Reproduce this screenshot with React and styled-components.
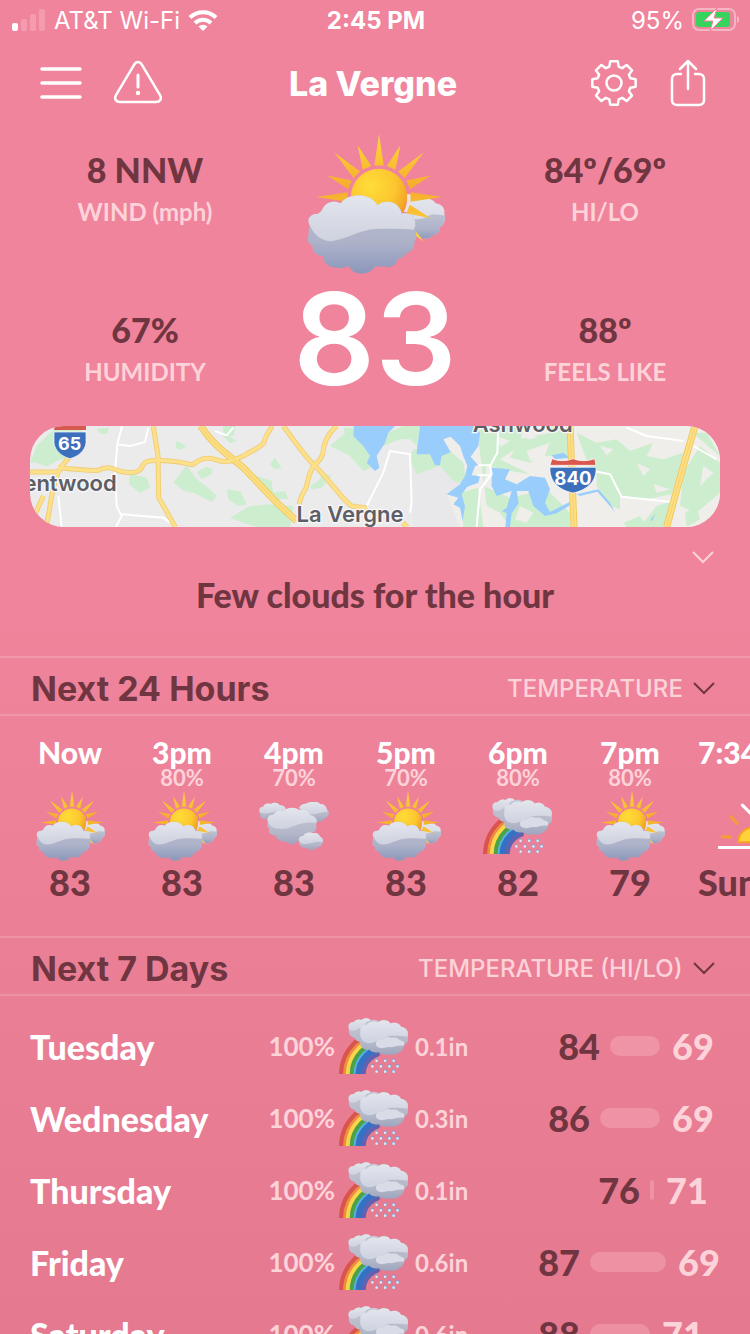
import React from 'react'
import styled, { createGlobalStyle, ThemeProvider } from 'styled-components'

const theme = {
  colors: {
    top: '#f0849c',
    bottom: '#e5798f',
    dark: '#6f3540',
    soft: '#fdd3da',
    white: '#ffffff',
    line: 'rgba(255, 255, 255, 0.16)',
    bar: 'rgba(255, 200, 210, 0.3)',
  },
  fonts: {
    ui: '"Inter", "Liberation Sans", sans-serif',
    hand: '"Lato", "Open Sans", sans-serif',
  },
}

const hours = [
  { time: 'Now', chance: '', icon: 'sun', temp: '83' },
  { time: '3pm', chance: '80%', icon: 'sun', temp: '83' },
  { time: '4pm', chance: '70%', icon: 'clouds', temp: '83' },
  { time: '5pm', chance: '70%', icon: 'sun', temp: '83' },
  { time: '6pm', chance: '80%', icon: 'rainbow', temp: '82' },
  { time: '7pm', chance: '80%', icon: 'sun', temp: '79' },
  { time: '7:34pm', chance: '', icon: 'sunset', temp: 'Sunset', wide: true },
]

// start and span are percentages of the range column
const days = [
  { day: 'Tuesday', chance: '100%', amount: '0.1in', hi: 84, lo: 69, start: 45, span: 25 },
  { day: 'Wednesday', chance: '100%', amount: '0.3in', hi: 86, lo: 69, start: 40, span: 30 },
  { day: 'Thursday', chance: '100%', amount: '0.1in', hi: 76, lo: 71, start: 65, span: 2 },
  { day: 'Friday', chance: '100%', amount: '0.6in', hi: 87, lo: 69, start: 35, span: 38 },
  { day: 'Saturday', chance: '100%', amount: '0.6in', hi: 88, lo: 71, start: 35, span: 30 },
]

const GlobalStyle = createGlobalStyle`
  *{
    box-sizing:border-box;
  }
  body{
    margin:0;
    background-color:#e5798f;
  }
  h1, h2, p, ul, dl, dd{
    margin:0;
    padding:0;
  }
  ul{
    list-style:none;
  }
  button, select{
    font:inherit;
    color:inherit;
    border:0;
    padding:0;
    background:none;
    cursor:pointer;
  }
`;

function rays() {
  const list = []
  for (let i = 0; i < 11; i++) {
    const a = ((-180 + i * 22.5) * Math.PI) / 180
    const tip = i % 2 === 0 ? 188 : 167
    const cx = 302
    const cy = 218
    const px = -Math.sin(a) * 14
    const py = Math.cos(a) * 14
    const bx = cx + Math.cos(a) * 94
    const by = cy + Math.sin(a) * 94
    list.push(
      `M${cx + Math.cos(a) * tip} ${cy + Math.sin(a) * tip}L${bx + px} ${by + py}L${bx - px} ${by - py}Z`
    )
  }
  return list.join('')
}

function Defs() {
  return (
    <svg width="0" height="0" style={{ display: 'block' }} aria-hidden="true">
      <defs>
        <radialGradient id="sunFill" cx="35%" cy="30%" r="75%">
          <stop offset="0" stopColor="#ffdd38" />
          <stop offset="0.6" stopColor="#fcc52f" />
          <stop offset="1" stopColor="#f19a22" />
        </radialGradient>
        <linearGradient id="rayFill" x1="0" y1="0" x2="0" y2="1">
          <stop offset="0" stopColor="#ffd83a" />
          <stop offset="0.5" stopColor="#f5ac2c" />
          <stop offset="1" stopColor="#ffd83a" />
        </linearGradient>
        <linearGradient id="cloudLight" x1="0" y1="0" x2="0" y2="1">
          <stop offset="0" stopColor="#e4e6ed" />
          <stop offset="1" stopColor="#ced2df" />
        </linearGradient>
        <linearGradient id="cloudDark" x1="0" y1="0" x2="0" y2="1">
          <stop offset="0" stopColor="#bcc0d0" />
          <stop offset="0.6" stopColor="#adb2c9" />
          <stop offset="1" stopColor="#8b97bb" />
        </linearGradient>
        <linearGradient id="cloudSoft" x1="0" y1="0" x2="0" y2="1">
          <stop offset="0" stopColor="#c6c9d5" />
          <stop offset="0.7" stopColor="#b3b7c8" />
          <stop offset="1" stopColor="#9ea5be" />
        </linearGradient>
        <clipPath id="bowClip">
          <path d="M230 120H330L362 160V228H230Z" />
        </clipPath>
      </defs>
    </svg>
  )
}

const cloudTop = 'M96 305C85 285 95 268 120 268C130 262 132 258 133 255C142 233 168 227 188 237C205 212 243 210 267 218C282 222 292 232 297 243C318 226 352 230 363 252C368 260 370 264 368 268C395 262 414 280 410 305'

function PartlySunny() {
  return (
    <svg viewBox="84 30 412 418" overflow="visible" aria-hidden="true">
      <path d="M392 226C400 230 410 228 418 228C440 218 462 222 470 236C490 240 500 252 497 268C502 285 498 300 484 308C482 325 474 332 464 332C454 345 432 345 422 336L385 345Z" fill="url(#cloudLight)" />
      <path d="M385 285C410 284 430 288 450 274C468 266 485 275 498 272C500 288 496 302 484 308C482 325 474 332 464 332C454 345 432 345 422 336L385 345Z" fill="url(#cloudDark)" />
      <circle cx="302" cy="218" r="84" fill="url(#sunFill)" />
      <path d="M385 210H398V236C398 250 392 258 386 264L376 262C384 248 388 230 385 210Z" fill="#eee2e0" />
      <path d={rays()} fill="url(#rayFill)" />
      <path d={cloudTop + 'C416 330 412 345 408 352C410 372 396 385 382 386C376 398 368 402 360 402C350 428 330 432 318 424C306 428 300 426 292 424C282 440 262 448 248 447C232 446 220 440 212 424C200 430 180 432 168 428C150 426 136 414 134 394C116 394 102 382 104 364C90 360 86 340 92 330C90 320 92 312 96 305Z'} fill="url(#cloudDark)" />
      <path d={cloudTop + 'L406 316C370 312 330 312 290 314C240 318 208 344 160 350C130 350 114 334 102 316Z'} fill="url(#cloudLight)" />
    </svg>
  )
}

function Clouds() {
  return (
    <svg viewBox="780 232 206 143" aria-hidden="true">
      <path d="M784 270C776 256 782 246 792 246C796 236 808 234 815 238C826 230 838 236 842 242C852 240 860 250 860 260L830 288C815 292 806 286 804 282C792 284 784 280 784 270Z" fill="url(#cloudSoft)" />
      <path d="M784 264C778 252 784 246 792 246C796 236 808 234 815 238C826 230 838 236 842 242C852 240 860 250 860 258C836 250 815 272 784 264Z" fill="url(#cloudLight)" />
      <path d="M898 250C902 238 916 238 922 236C936 228 952 230 960 238C970 236 980 246 980 254C990 262 986 276 976 278C968 290 952 292 942 290L905 280Z" fill="url(#cloudSoft)" />
      <path d="M898 250C902 238 916 238 922 236C936 228 952 230 960 238C970 236 980 246 982 262C965 258 945 272 925 268Z" fill="url(#cloudLight)" />
      <path d="M806 290C800 278 812 268 822 270C828 258 842 254 852 258C866 246 890 246 898 256C914 250 930 262 930 270C946 272 954 286 948 298C952 312 944 322 932 324L918 346C904 350 896 346 892 348C880 360 866 356 860 348C846 350 832 344 830 332C814 330 806 322 810 310C802 304 804 296 806 290Z" fill="url(#cloudSoft)" />
      <path d="M808 294C800 278 812 268 822 270C828 258 842 254 852 258C866 246 890 246 898 256C914 250 930 262 930 270C946 272 954 286 948 294C920 288 890 298 870 308C840 316 815 310 808 294Z" fill="url(#cloudLight)" />
      <path d="M898 348C894 338 904 332 910 332C916 320 932 320 938 324C950 320 958 328 960 334C970 338 970 350 966 354C964 364 954 366 950 366C942 376 926 374 922 368C906 370 896 358 898 348Z" fill="url(#cloudSoft)" />
      <path d="M898 346C894 338 904 332 910 332C916 320 932 320 938 324C950 320 958 328 960 334C968 338 970 346 968 350C950 346 936 354 918 356C908 356 900 352 898 346Z" fill="url(#cloudLight)" />
    </svg>
  )
}

// colour, radius, thickness
const bands = [
  ['#d9544f', 134, 14],
  ['#ef8a3e', 124, 9],
  ['#f9d549', 114, 13],
  ['#4ba345', 102, 13],
  ['#4fb2e3', 93, 7],
  ['#3470c4', 81, 19],
  ['#5f62b0', 66, 13],
]

const drops = [[352, 187], [378, 187], [404, 187], [339, 204], [365, 204], [391, 204], [416, 204], [352, 220], [378, 220], [404, 220]]

function Rainbow() {
  return (
    <svg viewBox="237 57 214 171" aria-hidden="true">
      <g clipPath="url(#bowClip)" fill="none">
        {bands.map(([color, r, w]) => (
          <circle key={color} cx="378" cy="230" r={r} stroke={color} strokeWidth={w} />
        ))}
      </g>
      <path d="M268 92C262 78 270 68 282 70C288 60 300 60 306 63C316 54 330 58 334 64C346 60 356 64 358 68C372 60 390 64 394 74C410 68 424 76 426 84C442 86 452 98 446 110C452 124 446 134 438 136C436 150 428 160 420 162C412 172 400 170 394 168C380 172 364 168 358 162C344 164 334 160 330 154C312 156 300 146 302 130C290 128 284 122 286 118C270 114 264 102 268 92Z" fill="url(#cloudSoft)" />
      <path d="M268 92C262 78 270 68 282 70C288 60 300 60 306 63C316 54 330 58 334 64C320 68 314 74 314 84C300 84 284 106 268 92Z" fill="url(#cloudLight)" />
      <path d="M302 100C300 86 310 76 322 78C330 66 346 66 356 70C372 60 390 64 394 74C410 68 424 76 426 84C442 86 452 98 446 114C430 112 410 110 390 112C366 118 350 134 330 134C306 132 300 116 302 100Z" fill="url(#cloudLight)" />
      <path d="M350 136C350 126 360 120 368 122C376 114 392 114 398 118C408 114 420 120 424 126C436 126 440 136 434 142C420 138 404 148 386 146C370 152 350 150 350 136Z" fill="#d9dce6" />
      {drops.map(([x, y]) => (
        <g key={`${x}-${y}`}>
          <ellipse cx={x} cy={y} rx="5" ry="6" fill="#7f9ac6" />
          <ellipse cx={x} cy={y + 1} rx="4" ry="4" fill="#dbe8f5" />
        </g>
      ))}
    </svg>
  )
}

function SunsetIcon() {
  return (
    <svg viewBox="0 0 66 44" fill="none" strokeLinecap="round" aria-hidden="true">
      <path d="M19 37a14 14 0 0 1 28 0z" fill="#ffd23a" stroke="#f5a12c" strokeWidth="2" />
      <path d="M4 32H12M12 13L18 19M54 32H62M54 13L48 19" stroke="#f79a3e" strokeWidth="3" />
      <path d="M1 42H65M23 2L33 12L43 2" stroke="#fff" strokeWidth="3" />
    </svg>
  )
}

const icons = { sun: PartlySunny, clouds: Clouds, rainbow: Rainbow, sunset: SunsetIcon }

const roads = [
  'M40 303C64 285 52 225 84 140C100 110 115 95 130 80',
  'M0 138H84M84 125C130 128 170 136 205 133C230 118 250 128 270 136C300 142 325 142 335 125C345 98 370 104 400 104C440 104 465 112 487 116C505 105 520 90 555 100C590 115 610 102 640 90C670 70 690 66 702 50C705 30 722 10 726 0',
  'M370 0L384 90L386 215L436 303',
  'M16 262L40 210',
  'M760 0C790 40 820 85 850 115C890 150 935 220 965 240L1010 246',
  'M920 0C890 25 880 55 878 85C870 110 850 115 845 130C830 160 834 175 826 190C815 205 810 220 808 235',
  'M1118 290L1132 303',
]

const highways = ['M512 0C550 60 600 90 640 125L740 230L800 285', 'M1620 0L1632 303', 'M1995 0L1960 120L1938 200L1910 303']

function MapDrawing() {
  return (
    <svg viewBox="0 0 2070 303" preserveAspectRatio="xMidYMid slice" role="img" aria-label="Map of La Vergne">
      <rect width="2070" height="303" fill="#ebebec" />
      <path d="M1290 303L1180 240L1150 0H2070V303Z" fill="#f0eeea" />
      <path d="M1140 100L1160 145L1230 120L1310 175L1250 205L1290 303H1150Z" fill="#e8e8ea" />
      <g fill="#cdedcf">
        <path d="M0 110L20 60L60 20L100 0H160L130 90L80 105L50 122L20 110ZM200 8L238 5L230 24L208 22Z" />
        <path d="M300 145L350 155L360 185L330 200L296 175ZM440 45L470 60L452 72L436 65ZM580 0H615L612 28L596 30L620 45L600 52L580 30Z" />
        <path d="M500 138L530 122L548 130L545 145L515 160ZM430 170L470 118L500 160L540 190L560 210L545 228L490 200L462 195ZM590 190L630 196L650 235L625 240L595 220ZM680 150L725 165L730 200L765 195L775 218L735 222L700 190Z" />
        <path d="M720 115L735 95L755 125L735 130ZM600 275L660 240L720 235L790 240L780 303H680L640 290ZM840 180L865 165L880 140L905 150L875 185L845 190Z" />
        <path d="M900 60L970 0L1035 120L1000 135L960 90ZM940 5H985V60L960 65Z" />
        <path d="M1050 30L1120 0H1170L1160 60L1140 40L1110 40L1060 60ZM1150 70L1260 75L1300 110L1310 175L1270 165L1230 120L1160 145L1140 100Z" />
        <path d="M1290 200L1345 185L1360 303H1300ZM1340 0H1480L1470 60L1410 100L1500 145L1440 135L1370 120L1360 180L1440 215L1550 190L1620 260V303H1440L1410 260L1370 240Z" />
        <path d="M1470 40L1560 20L1550 80L1500 110L1440 95ZM1560 0L1620 10V90L1540 90ZM1640 20L1700 50L1760 40L1800 75L1870 50L1850 90L1900 100L1960 80L1925 205L1850 220L1770 210L1730 160L1680 130Z" />
        <path d="M1700 120L1770 210V250L1740 240L1700 180ZM1830 303L1880 240L1925 225L1900 303ZM1960 140L2010 60L2070 110V200L2000 260L1950 240ZM1990 20H2030L2070 90L2010 40ZM1780 290L1830 270L1850 303H1790ZM1965 260L2000 240L2010 280L1970 303Z" />
      </g>
      <g fill="#f0eeea">
        <path d="M1490 75L1560 50L1540 100L1500 105ZM1400 30L1440 45L1410 62ZM1500 15L1520 35L1492 40ZM1820 110L1860 130L1840 150ZM1870 175L1920 190L1880 200ZM1710 60L1750 70L1730 88ZM1470 240L1510 260L1490 290L1455 280ZM2020 120L2050 140L2010 180Z" />
      </g>
      <g fill="#99cdfb">
        <path d="M972 0L970 30L1000 60L1020 90L1010 110L1035 135L1048 125L1040 90L1065 50L1075 20L1095 0Z" />
        <path d="M1170 0L1162 60L1160 85L1200 85L1215 118L1230 118L1235 90L1262 78L1240 40L1262 32L1290 60L1300 90L1312 120L1305 150L1290 175L1250 205L1285 215L1270 235L1290 245L1298 285L1305 240L1295 205L1312 182L1345 170L1350 150L1325 148L1335 120L1345 118L1322 92L1345 60L1350 20L1330 0Z" />
        <path d="M1385 125L1440 130L1425 160L1460 175L1500 150L1545 155L1560 190L1545 230L1560 258L1625 225L1625 235L1580 262L1545 270L1510 240L1495 195L1460 195L1462 205L1466 232L1445 262L1440 303H1426L1430 262L1416 255L1430 245L1445 195L1400 210L1385 180ZM1565 88L1600 80L1620 95L1575 100Z" />
        <path d="M1640 205L1705 190L1740 230L1755 260L1740 240L1702 197L1650 210ZM1860 285L1875 262L1868 282Z" />
      </g>
      <g fill="none" stroke="#fff" strokeWidth="6" strokeLinejoin="round">
        <path d="M276 0L262 55L300 60L345 48L355 5M262 55L255 140L260 240L275 270L258 303M275 265L400 275L420 290M85 210L95 303M555 15L590 28L610 5" />
        <path d="M1010 240L1060 140L1080 75L1140 85L1145 230L1140 260M1405 0L1402 80L1380 120L1385 145L1350 190L1340 303M1345 118H1385M1342 148H1380M1790 5L1850 30L1960 45M1690 135L1740 145L1775 212L1925 228M1990 60L2060 100" />
      </g>
      <g fill="none" strokeLinejoin="round">
        {roads.map((d) => <path key={d} d={d} stroke="#f1cb72" strokeWidth="15" />)}
        {highways.map((d) => <path key={d} d={d} stroke="#f1c862" strokeWidth="21" />)}
        {roads.map((d) => <path key={d} d={d} stroke="#fce08a" strokeWidth="10" />)}
        {highways.map((d) => <path key={d} d={d} stroke="#fcdf83" strokeWidth="15" />)}
        {highways.map((d) => <path key={d} d={d} stroke="#f1c862" strokeWidth="2" />)}
      </g>
      <path d="M74 0H168V12H72Z" fill="#d45a50" />
      <path d="M72 18H168V50C166 74 144 92 120 98C96 92 74 74 72 50Z" fill="#3c70bd" stroke="#fff" strokeWidth="2" />
      <path d="M1566 98C1585 106 1610 106 1629 98C1648 106 1673 106 1694 98L1698 118H1560Z" fill="#d9574f" stroke="#fff" strokeWidth="2" />
      <path d="M1560 124H1698C1700 160 1680 190 1629 201C1578 190 1558 160 1560 124Z" fill="#3c70bd" stroke="#fff" strokeWidth="2" />
      <g fontFamily="Inter, Liberation Sans, sans-serif" fontWeight="700" fill="#fff" textAnchor="middle">
        <text x="119" y="72" fontSize="54">65</text>
        <text x="1629" y="176" fontSize="56">840</text>
      </g>
      <g fontFamily="Inter, Liberation Sans, sans-serif" fontWeight="600" fontSize="66" fill="#5e5e66" stroke="#f7f7f7" strokeWidth="8" paintOrder="stroke">
        <text x="260" y="194" textAnchor="end">Brentwood</text>
        <text x="960" y="288" textAnchor="middle">La Vergne</text>
        <text x="1478" y="18" textAnchor="middle">Ashwood</text>
      </g>
    </svg>
  )
}

function Chevron() {
  return (
    <svg width="22" height="14" viewBox="0 0 22 14" fill="none" stroke="currentColor" strokeWidth="2" aria-hidden="true">
      <path d="M1 2L11 12L21 2" />
    </svg>
  )
}

const gear = (() => {
  const pts = []
  for (let i = 0; i < 8; i++) {
    const c = -90 + i * 45
    ;[[-16, 17], [-10, 22], [10, 22], [16, 17]].forEach(([da, r]) => {
      const a = ((c + da) * Math.PI) / 180
      pts.push(`${24 + Math.cos(a) * r} ${24 + Math.sin(a) * r}`)
    })
  }
  return `M${pts.join('L')}Z`
})()

function StatusBar() {
  return (
    <Status>
      <StatusGroup>
        <svg width="34" height="22" viewBox="0 0 34 22" fill="#fff" aria-hidden="true">
          <rect x="0" y="14" width="6" height="8" rx="2" />
          <g opacity="0.2">
            <rect x="9" y="10" width="6" height="12" rx="2" />
            <rect x="18" y="5" width="6" height="17" rx="2" />
            <rect x="27" y="0" width="6" height="22" rx="2" />
          </g>
        </svg>
        <span>AT&amp;T Wi-Fi</span>
        <svg width="30" height="22" viewBox="0 0 30 22" fill="none" stroke="#fff" strokeWidth="4" aria-hidden="true">
          <path d="M2 8.500A18.500 18.500 0 0 1 28 8.500" />
          <path d="M7 14A11.500 11.500 0 0 1 23 14" />
          <path d="M10.500 17.500A6.500 6.500 0 0 1 19.500 17.500L15 22Z" fill="#fff" stroke="none" />
        </svg>
      </StatusGroup>
      <Clock>2:45 PM</Clock>
      <StatusGroup $end>
        <span>95%</span>
        <svg width="48" height="24" viewBox="0 0 48 24" aria-hidden="true">
          <rect x="1" y="1" width="42" height="21" rx="6" fill="none" stroke="#fff" strokeOpacity="0.4" strokeWidth="2" />
          <path d="M45 8C48 9 48 14 45 15Z" fill="#fff" fillOpacity="0.4" />
          <rect x="4" y="4" width="34" height="15" rx="3" fill="#35d45d" />
          <path d="M25 0L12 13H21L18 23L31 10H22Z" fill="#fff" stroke="#f0849c" strokeWidth="1" />
        </svg>
      </StatusGroup>
    </Status>
  )
}

function Header() {
  return (
    <Bar>
      <BarGroup>
        <button aria-label="Menu">
          <svg width="42" height="46" viewBox="0 0 42 46" stroke="#fff" strokeWidth="3.500" strokeLinecap="round" aria-hidden="true">
            <path d="M2 9H40M2 23H40M2 37H40" />
          </svg>
        </button>
        <button aria-label="Alerts">
          <svg width="48" height="46" viewBox="0 0 48 46" fill="none" stroke="#fff" strokeWidth="2.500" strokeLinecap="round" aria-hidden="true">
            <path d="M20 5C22 1 26 1 28 5L46 35C48 39 46 42 42 42H6C2 42 0 39 2 35Z" />
            <path d="M24 15V27" strokeWidth="3" />
            <circle cx="24" cy="33" r="1" fill="#fff" />
          </svg>
        </button>
      </BarGroup>
      <City>La Vergne</City>
      <BarGroup $end>
        <button aria-label="Settings">
          <svg width="48" height="48" viewBox="0 0 48 48" fill="none" stroke="#fff" strokeWidth="2.500" strokeLinejoin="round" aria-hidden="true">
            <path d={gear} />
            <circle cx="24" cy="24" r="7.500" />
          </svg>
        </button>
        <button aria-label="Share">
          <svg width="36" height="48" viewBox="0 0 36 48" fill="none" stroke="#fff" strokeWidth="2.500" strokeLinecap="round" strokeLinejoin="round" aria-hidden="true">
            <path d="M11 15H7C4 15 2 17 2 20V41C2 44 4 46 7 46H29C32 46 34 44 34 41V20C34 17 32 15 29 15H25" />
            <path d="M18 30V2M10 10L18 2L26 10" />
          </svg>
        </button>
      </BarGroup>
    </Bar>
  )
}

function StatItem({ value, label }) {
  return (
    <Stat>
      <dd>{value}</dd>
      <dt>{label}</dt>
    </Stat>
  )
}

function SectionHeader({ title, id, option }) {
  return (
    <SectionBar>
      <h2>{title}</h2>
      <Picker htmlFor={id}>
        <select id={id} aria-label={`${title} value`}>
          <option>{option}</option>
        </select>
        <Chevron />
      </Picker>
    </SectionBar>
  )
}

function App() {
  return (
    <ThemeProvider theme={theme}>
      <GlobalStyle />
      <Screen>
        <Defs />
        <StatusBar />
        <Header />
        <Current>
          <StatColumn>
            <StatItem value="8 NNW" label="WIND (mph)" />
            <StatItem value="67%" label="HUMIDITY" />
          </StatColumn>
          <Now>
            <PartlySunny />
            <p>83</p>
          </Now>
          <StatColumn>
            <StatItem value="84º/69º" label="HI/LO" />
            <StatItem value="88º" label="FEELS LIKE" />
          </StatColumn>
        </Current>
        <MapCard>
          <MapDrawing />
        </MapCard>
        <Summary>
          <button aria-label="Show more"><Chevron /></button>
          <p>Few clouds for the hour</p>
        </Summary>
        <SectionHeader title="Next 24 Hours" id="hourly" option="TEMPERATURE" />
        <HourList>
          {hours.map((h) => {
            const Icon = icons[h.icon]
            return (
              <Hour key={h.time} $wide={h.wide}>
                <HourTime>{h.time}</HourTime>
                <HourChance>{h.chance}</HourChance>
                <IconBox $inset={h.wide}><Icon /></IconBox>
                <HourTemp>{h.temp}</HourTemp>
              </Hour>
            )
          })}
        </HourList>
        <SectionHeader title="Next 7 Days" id="daily" option="TEMPERATURE (HI/LO)" />
        <DayList>
          {days.map((d) => (
            <Day key={d.day}>
              <DayName>{d.day}</DayName>
              <Chance>{d.chance}</Chance>
              <IconBox><Rainbow /></IconBox>
              <Amount>{d.amount}</Amount>
              <Range>
                <Hi style={{ width: `${d.start}%` }}>{d.hi}</Hi>
                <RangeBar style={{ width: `${d.span}%` }} />
                <Lo>{d.lo}</Lo>
              </Range>
            </Day>
          ))}
        </DayList>
      </Screen>
    </ThemeProvider>
  )
}

const Screen = styled.main`
  display:flex;
  flex-direction:column;
  height:100vh;
  overflow:hidden;
  background:linear-gradient(${({ theme }) => theme.colors.top} 45%, ${({ theme }) => theme.colors.bottom});
  color:${({ theme }) => theme.colors.white};
  font-family:${({ theme }) => theme.fonts.ui};
  > *{
    flex-shrink:0;
  }
`;

const Status = styled.div`
  display:grid;
  grid-template-columns:1fr auto 1fr;
  align-items:center;
  height:40px;
  padding:0 10px 0 12px;
  font-size:24px;
`;

const StatusGroup = styled.div`
  display:flex;
  align-items:center;
  gap:8px;
  justify-content:${({ $end }) => ($end ? 'flex-end' : 'flex-start')};
`;

const Clock = styled.span`
  font-weight:700;
`;

const Bar = styled.header`
  display:grid;
  grid-template-columns:1fr auto 1fr;
  align-items:center;
  height:86px;
  padding:0 44px 0 40px;
  svg{
    display:block;
  }
`;

const BarGroup = styled.div`
  display:flex;
  align-items:center;
  gap:32px;
  justify-content:${({ $end }) => ($end ? 'flex-end' : 'flex-start')};
`;

const City = styled.h1`
  font-size:34px;
  font-weight:800;
`;

const Current = styled.section`
  display:grid;
  grid-template-columns:1fr 170px 1fr;
  height:300px;
  padding-top:8px;
`;

const StatColumn = styled.dl`
  display:flex;
  flex-direction:column;
  align-items:center;
  gap:76px;
  padding-top:14px;
`;

const Stat = styled.div`
  display:flex;
  flex-direction:column;
  align-items:center;
  font-family:${({ theme }) => theme.fonts.hand};
  dd{
    font-size:34px;
    font-weight:900;
    line-height:44px;
    color:${({ theme }) => theme.colors.dark};
  }
  dt{
    font-size:24px;
    font-weight:700;
    line-height:40px;
    color:${({ theme }) => theme.colors.soft};
  }
`;

const Now = styled.div`
  display:flex;
  flex-direction:column;
  align-items:center;
  svg{
    width:138px;
    height:140px;
  }
  p{
    font-size:128px;
    font-weight:600;
    line-height:130px;
  }
`;

const MapCard = styled.div`
  height:101px;
  margin:0 30px;
  border-radius:34px;
  overflow:hidden;
  svg{
    display:block;
    width:100%;
    height:100%;
  }
`;

const Summary = styled.section`
  display:flex;
  flex-direction:column;
  height:129px;
  padding:20px 36px 0;
  button{
    align-self:flex-end;
    height:22px;
    color:${({ theme }) => theme.colors.soft};
  }
  p{
    text-align:center;
    font-family:${({ theme }) => theme.fonts.hand};
    font-size:34px;
    font-weight:900;
    line-height:52px;
    color:${({ theme }) => theme.colors.dark};
  }
`;

const SectionBar = styled.div`
  display:flex;
  align-items:center;
  justify-content:space-between;
  height:60px;
  padding:4px 35px 0 31px;
  border-top:2px solid ${({ theme }) => theme.colors.line};
  border-bottom:2px solid ${({ theme }) => theme.colors.line};
  h2{
    font-size:34px;
    font-weight:700;
    color:${({ theme }) => theme.colors.dark};
  }
`;

const Picker = styled.label`
  display:flex;
  align-items:center;
  gap:10px;
  color:${({ theme }) => theme.colors.dark};
  select{
    appearance:none;
    font-size:24px;
    font-weight:500;
    color:${({ theme }) => theme.colors.soft};
  }
`;

const HourList = styled.ul`
  display:flex;
  height:220px;
  padding:20px 14px 0;
  overflow:hidden;
`;

const Hour = styled.li`
  display:flex;
  flex-direction:column;
  align-items:${({ $wide }) => ($wide ? 'flex-start' : 'center')};
  flex:0 0 112px;
  margin-left:${({ $wide }) => ($wide ? '12px' : '0')};
  font-family:${({ theme }) => theme.fonts.hand};
`;

const HourTime = styled.span`
  font-size:30px;
  font-weight:900;
  line-height:32px;
`;

const HourChance = styled.span`
  height:20px;
  font-size:22px;
  font-weight:700;
  line-height:20px;
  color:${({ theme }) => theme.colors.soft};
`;

const IconBox = styled.span`
  display:flex;
  align-items:center;
  justify-content:center;
  height:76px;
  padding-left:${({ $inset }) => ($inset ? '20px' : '0')};
  svg{
    display:block;
    width:70px;
    max-height:70px;
  }
`;

const HourTemp = styled.span`
  font-size:36px;
  font-weight:900;
  line-height:36px;
  color:${({ theme }) => theme.colors.dark};
`;

const DayList = styled.ul`
  padding:12px 30px 0;
`;

const Day = styled.li`
  display:grid;
  grid-template-columns:minmax(0, 180fr) minmax(0, 125fr) minmax(0, 78fr) minmax(0, 107fr) minmax(0, 200fr);
  align-items:center;
  height:72px;
  font-family:${({ theme }) => theme.fonts.hand};
  font-weight:700;
`;

const DayName = styled.span`
  font-size:34px;
  font-weight:900;
`;

const Chance = styled.span`
  text-align:right;
  font-size:26px;
  color:${({ theme }) => theme.colors.soft};
`;

const Amount = styled.span`
  padding-left:2px;
  font-size:24px;
  color:${({ theme }) => theme.colors.soft};
`;

const Range = styled.span`
  display:flex;
  align-items:center;
  font-size:36px;
  font-weight:900;
`;

const Hi = styled.span`
  padding-right:10px;
  text-align:right;
  color:${({ theme }) => theme.colors.dark};
`;

const RangeBar = styled.span`
  height:20px;
  border-radius:10px;
  background-color:${({ theme }) => theme.colors.bar};
`;

const Lo = styled.span`
  padding-left:12px;
  color:${({ theme }) => theme.colors.soft};
`;

export default App
